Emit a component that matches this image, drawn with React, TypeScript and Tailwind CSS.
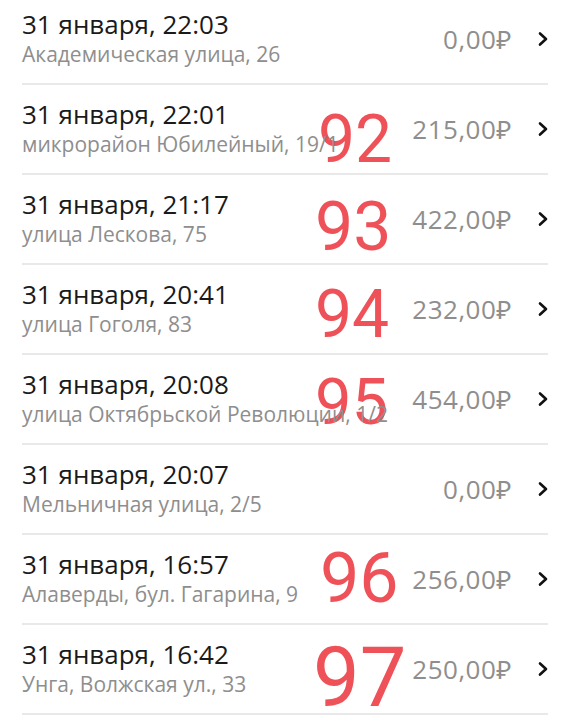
import React from "react";

type Ride = { title: string; address: string; price: string };

const rides: Ride[] = [
  { title: "31 января, 22:03", address: "Академическая улица, 26", price: "0,00₽" },
  { title: "31 января, 22:01", address: "микрорайон Юбилейный, 19/1", price: "215,00₽" },
  { title: "31 января, 21:17", address: "улица Лескова, 75", price: "422,00₽" },
  { title: "31 января, 20:41", address: "улица Гоголя, 83", price: "232,00₽" },
  { title: "31 января, 20:08", address: "улица Октябрьской Революции, 1/2", price: "454,00₽" },
  { title: "31 января, 20:07", address: "Мельничная улица, 2/5", price: "0,00₽" },
  { title: "31 января, 16:57", address: "Алаверды, бул. Гагарина, 9", price: "256,00₽" },
  { title: "31 января, 16:42", address: "Унга, Волжская ул., 33", price: "250,00₽" },
];

function Chevron() {
  return (
    <svg width="10" height="16" viewBox="0 0 10 16" className="shrink-0">
      <polyline
        points="2,2.5 8,8 2,13.5"
        fill="none"
        stroke="#111"
        strokeWidth="2.6"
        strokeLinecap="round"
        strokeLinejoin="round"
      />
    </svg>
  );
}

export default function App() {
  return (
    <div
      className="relative w-[570px] h-[719px] overflow-hidden bg-white"
      style={{ fontFamily: '"Open Sans", "Noto Sans", sans-serif' }}
    >
      {/* annotation layer (behind text) */}
      <div
        className="absolute inset-0 z-0 text-[#ef5158]"
        style={{ fontFamily: 'Roboto, "Liberation Sans", sans-serif' }}
      >
        <span className="absolute left-[318px] top-[107px] text-[66px] leading-none">92</span>
        <span className="absolute left-[315px] top-[193px] text-[68px] leading-none">93</span>
        <span className="absolute left-[315px] top-[282px] text-[66px] leading-none">94</span>
        <span className="absolute left-[315px] top-[370px] text-[65px] leading-none">95</span>
        <span className="absolute left-[320px] top-[543px] text-[70px] leading-none">96</span>
        <span className="absolute left-[313px] top-[643px] text-[83px] leading-[70px]">97</span>
      </div>

      <div className="relative z-10 -mt-[5px] flex flex-col">
        {rides.map((r, i) => (
          <div
            key={i}
            className="mx-[22px] h-[90px] flex items-center justify-between border-b-2 border-[#e9e9e9]"
          >
            <div className="flex flex-col -mt-[2px]">
              <div className="text-[26px] leading-[32px] text-[#1a1a1a] whitespace-nowrap">
                {r.title}
              </div>
              <div className="text-[21px] leading-[28px] text-[#8e8e8e] whitespace-nowrap">
                {r.address}
              </div>
            </div>
            <div className="flex items-center gap-[26px]">
              <span className="text-[26px] tracking-[0.5px] text-[#8e8e8e] whitespace-nowrap">
                {r.price}
              </span>
              <Chevron />
            </div>
          </div>
        ))}
      </div>
    </div>
  );
}
